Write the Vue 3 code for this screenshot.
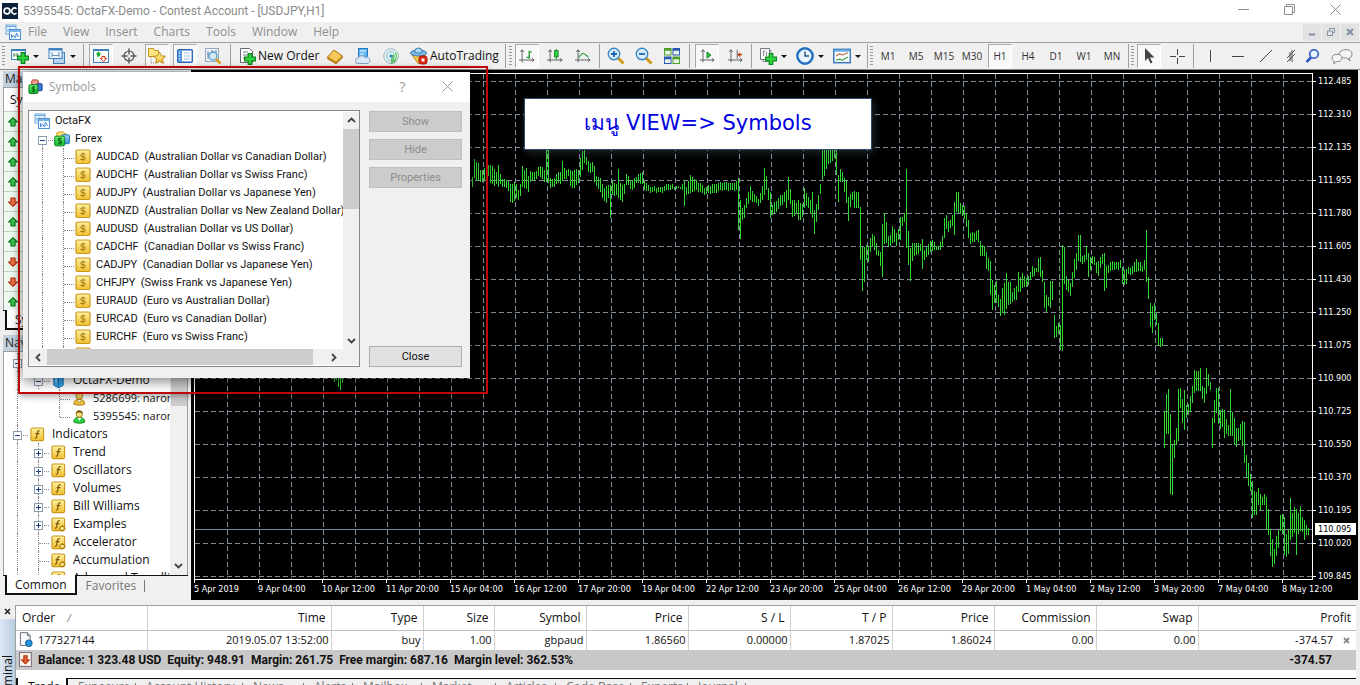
<script setup>
const menus = ['File', 'View', 'Insert', 'Charts', 'Tools', 'Window', 'Help']
const periods = ['M1', 'M5', 'M15', 'M30', 'H1', 'H4', 'D1', 'W1', 'MN']
const watch = ['up', 'up', 'up', 'up', 'down', 'up', 'up', 'down', 'down', 'up']

const pairs = [
  ['AUDCAD', 'Australian Dollar vs Canadian Dollar'],
  ['AUDCHF', 'Australian Dollar vs Swiss Franc'],
  ['AUDJPY', 'Australian Dollar vs Japanese Yen'],
  ['AUDNZD', 'Australian Dollar vs New Zealand Dollar'],
  ['AUDUSD', 'Australian Dollar vs US Dollar'],
  ['CADCHF', 'Canadian Dollar vs Swiss Franc'],
  ['CADJPY', 'Canadian Dollar vs Japanese Yen'],
  ['CHFJPY', 'Swiss Frank vs Japanese Yen'],
  ['EURAUD', 'Euro vs Australian Dollar'],
  ['EURCAD', 'Euro vs Canadian Dollar'],
  ['EURCHF', 'Euro vs Swiss Franc'],
]
const symbolRows = [
  { text: 'OctaFX', icon: 'charts', level: 0, box: '', lines: [] },
  { text: 'Forex', icon: 'folders', level: 1, box: '−', lines: [1] },
  ...pairs.map(([code, name]) => ({
    text: `${code}  (${name})`, icon: 'dollar', level: 2, box: '', lines: [1, 2],
  })),
  { text: '', icon: 'dollar', level: 2, box: '', lines: [1, 2] },
]

const navRows = [
  { text: 'Accounts', icon: 'user', level: 0, box: '−', lines: [0] },
  { text: 'OctaFX-Demo', icon: 'server', level: 1, box: '−', lines: [0, 1] },
  { text: '5286699: naron', icon: 'user', level: 2, box: '', lines: [0, 2] },
  { text: '5395545: naron', icon: 'useron', level: 2, box: '', lines: [0, 2], last: true },
  { text: 'Indicators', icon: 'fx', level: 0, box: '−', lines: [0] },
  ...['Trend', 'Oscillators', 'Volumes', 'Bill Williams'].map((text) => ({
    text, icon: 'fx', level: 1, box: '+', lines: [0, 1],
  })),
  { text: 'Examples', icon: 'fxc', level: 1, box: '+', lines: [0, 1] },
  ...['Accelerator', 'Accumulation', 'Advanced Trendlin'].map((text) => ({
    text, icon: 'fxc', level: 1, box: '', lines: [0, 1],
  })),
]

const prices = [
  '112.485', '112.310', '112.135', '111.955', '111.780', '111.605', '111.430', '111.250',
  '111.075', '110.900', '110.725', '110.550', '110.370', '110.195', '110.020', '109.845',
]
const times = [
  '5 Apr 2019', '9 Apr 04:00', '10 Apr 12:00', '11 Apr 20:00', '15 Apr 04:00', '16 Apr 12:00',
  '17 Apr 20:00', '19 Apr 04:00', '22 Apr 12:00', '23 Apr 20:00', '25 Apr 04:00', '26 Apr 12:00',
  '29 Apr 20:00', '1 May 04:00', '2 May 12:00', '3 May 20:00', '7 May 04:00', '8 May 12:00',
]
const gridX = Array.from({ length: 34 }, (_, i) => 227.5 + i * 32)
const gridY = Array.from({ length: 16 }, (_, i) => 81.5 + i * 33)

/* Each entry is x, high, low; bars between two entries are interpolated. */
const series = `472 177 187 474 159 178 478 163 181 480 170 182 484 168 180 488 165 176 490 165 183 494 169 186
496 172 184 498 165 187 500 174 184 502 179 187 506 180 188 508 181 191 510 184 202 514 182 201 516 184 198
518 190 200 520 184 196 522 166 187 524 170 188 526 168 189 528 176 192 530 171 182 534 172 180 538 167 176
542 167 179 544 170 182 546 145 182 548 145 183 550 178 188 552 179 187 556 174 184 560 172 184 562 161 181
564 168 179 568 169 176 570 170 186 574 170 188 578 170 183 580 158 177 582 151 170 584 150 163 586 157 165
588 161 172 592 162 172 594 166 182 596 176 186 600 178 192 604 188 201 606 186 203 608 185 198 610 185 218
612 180 195 616 184 195 618 169 198 620 183 200 622 185 202 624 184 194 626 174 185 628 176 185 630 180 189
634 178 188 636 177 183 638 174 183 642 172 184 644 181 190 648 185 191 652 187 192 660 187 192 668 184 190
676 186 189 680 187 189 682 184 190 684 180 206 686 187 195 690 175 193 692 177 192 696 180 190 700 183 192
704 188 195 708 185 193 714 184 193 720 182 190 726 182 190 732 183 190 736 181 190 738 178 230 740 200 239
742 208 220 744 205 218 746 198 208 750 186 200 754 194 202 758 199 206 762 186 200 764 168 195 766 176 190
768 188 200 770 192 218 772 205 215 776 201 212 780 195 206 784 192 202 786 190 208 788 177 200 790 189 204
792 200 217 794 200 216 796 203 214 798 200 220 802 204 217 804 188 208 806 193 206 808 197 208 810 200 214
812 192 218 814 210 234 816 204 222 818 195 210 820 184 194 822 145 180 828 145 164 830 145 163 834 145 158
836 145 175 838 175 202 840 169 182 842 172 182 844 178 192 846 181 203 848 197 221 850 194 207 852 192 200
854 191 208 858 192 208 860 207 260 862 247 291 864 247 282 866 245 260 868 246 262 870 238 252 872 234 247
874 236 250 876 243 255 878 250 256 880 252 266 882 224 277 884 213 244 886 222 243 888 236 247 890 235 246
892 226 243 894 229 242 896 233 246 898 229 240 900 217 240 902 217 226 904 213 222 906 169 248 908 231 265
910 248 281 912 243 261 914 243 256 918 243 254 920 244 251 922 239 269 924 250 260 926 247 257 930 241 252
932 240 251 934 242 250 936 246 250 938 246 250 940 242 250 942 236 247 944 218 238 946 215 229 948 221 232
950 220 228 952 215 226 954 202 235 956 192 212 958 192 213 960 203 214 962 205 216 964 206 219 966 213 227
968 220 238 970 233 244 974 233 242 976 231 240 978 230 242 980 241 256 982 245 256 984 246 256 986 252 269
988 258 271 990 261 295 992 280 310 994 285 303 996 281 303 998 295 307 1000 299 316 1002 288 313 1004 283 315
1006 273 309 1008 282 305 1010 282 304 1012 292 302 1016 286 300 1018 272 292 1020 277 292 1022 273 288
1024 276 287 1026 278 287 1030 272 280 1032 266 277 1036 268 272 1038 258 272 1040 257 277 1042 270 282
1044 282 308 1046 295 312 1048 297 306 1050 281 308 1052 281 300 1054 315 338 1056 326 337 1058 323 334
1060 325 350 1062 245 351 1064 247 284 1066 276 290 1068 280 292 1070 283 296 1072 272 287 1074 259 278
1076 253 270 1078 235 261 1080 235 262 1082 256 264 1084 255 262 1086 246 260 1088 253 277 1090 257 270
1092 256 264 1094 257 265 1096 262 273 1098 261 276 1100 257 268 1102 254 264 1104 253 291 1106 266 288
1108 265 273 1112 261 270 1116 262 269 1120 260 268 1122 267 284 1124 270 285 1126 269 284 1128 267 274
1132 266 274 1136 259 272 1138 262 271 1140 262 271 1142 266 272 1144 260 270 1146 230 282 1148 277 299
1150 303 327 1152 306 333 1154 303 320 1156 313 325 1158 323 346 1160 338 347 1162 338 346 1164 411 448
1166 394 434 1168 389 434 1170 414 494 1172 444 495 1174 440 458 1176 428 445 1178 389 441 1180 388 408
1182 399 423 1184 390 430 1186 405 418 1188 404 415 1190 396 412 1192 386 403 1194 370 393 1196 371 391
1198 371 391 1200 368 391 1202 386 399 1204 388 403 1206 368 394 1208 374 386 1210 382 390 1212 418 448
1214 400 423 1216 388 413 1218 388 424 1220 410 429 1222 409 427 1224 410 438 1226 419 434 1228 425 436
1230 389 436 1232 412 436 1234 418 445 1236 428 447 1238 428 441 1240 424 440 1242 421 446 1244 422 463
1246 455 477 1248 463 486 1250 474 491 1252 481 518 1254 491 515 1256 492 515 1258 488 505 1260 494 510
1262 497 505 1264 494 505 1266 497 530 1268 509 535 1270 529 556 1272 539 567 1274 549 564 1276 536 556
1278 530 548 1280 515 531 1282 514 534 1284 517 555 1286 534 557 1288 529 554 1290 498 540 1292 513 537
1294 507 533 1296 509 555 1298 513 534 1300 506 531 1302 517 532 1304 520 540 1306 525 535 1308 528 535`
  .split(/\s+/).map(Number)

function barsPath(values) {
  const keys = []
  for (let i = 0; i < values.length; i += 3) keys.push(values.slice(i, i + 3))
  let d = 'M334.5 376V382M336.5 376V380M338.5 376V387M340.5 376V390M342.5 376V383M348.5 376V379'
  keys.forEach(([x, hi, lo], i) => {
    const next = keys[i + 1] || [x + 2, hi, lo]
    for (let px = x; px < next[0]; px += 2) {
      const t = (px - x) / (next[0] - x)
      const wobble = px === x ? 0 : ((px * 7) % 3) - 1
      const top = Math.round(hi + (next[1] - hi) * t + wobble)
      const bottom = Math.round(lo + (next[2] - lo) * t + wobble)
      d += `M${px + 0.5} ${top}V${bottom}`
    }
  })
  return d
}
const bars = barsPath(series)

const columns = [
  ['order', 'Order', '177327144'], ['time', 'Time', '2019.05.07 13:52:00'], ['type', 'Type', 'buy'],
  ['size', 'Size', '1.00'], ['type', 'Symbol', 'gbpaud'], ['num', 'Price', '1.86560'],
  ['num', 'S / L', '0.00000'], ['num', 'T / P', '1.87025'], ['num', 'Price', '1.86024'],
  ['num', 'Commission', '0.00'], ['num', 'Swap', '0.00'], ['profit', 'Profit', '-374.57'],
]
const tabs = [
  ['Exposure', 68], ['Account History', 107], ['News', 61], ['Alerts', 49], ['Mailbox', 69],
  ['Market', 74], ['Articles', 60], ['Code Base', 75], ['Experts', 57], ['Journal', 58],
]
</script>

<template>
  <div class="app">
    <svg class="defs" aria-hidden="true">
      <defs>
        <linearGradient id="gold" x1="0" y1="0" x2="0" y2="1"><stop offset="0" stop-color="#fff0a0" /><stop offset="1" stop-color="#f0c030" /></linearGradient>
        <linearGradient id="blue" x1="0" y1="0" x2="0" y2="1"><stop offset="0" stop-color="#9fd4f8" /><stop offset="1" stop-color="#3f8fd8" /></linearGradient>
        <linearGradient id="green" x1="0" y1="0" x2="0" y2="1"><stop offset="0" stop-color="#6cf06c" /><stop offset="1" stop-color="#10b428" /></linearGradient>
      </defs>
      <symbol id="i-plus" viewBox="0 0 10 10"><path d="M3.5.5h3v3h3v3h-3v3h-3v-3h-3v-3h3z" fill="#2fd63f" stroke="#0a8a1a" /></symbol>
      <symbol id="i-charts" viewBox="0 0 16 16"><rect x="1" y="1" width="10" height="9" fill="#e8f4ff" stroke="#6aa8dc" /><path d="M1 2.5h10M3 5v3M5 4v3M7 5v3" stroke="#6aa8dc" /><rect x="4.500" y="5.500" width="11" height="10" fill="#f4faff" stroke="#4c90d0" /><path d="M4.500 7h11" stroke="#7ab4e4" stroke-width="2" /><path d="M6.500 10v4l2-3 2 3 1-5 2 4" fill="none" stroke="#4c90d0" /></symbol>
      <symbol id="i-newchart" viewBox="0 0 18 18"><rect x=".5" y="2.500" width="14" height="10" fill="#f4faff" stroke="#3f80c0" /><path d="M0 3h15" stroke="#3f80c0" stroke-width="2" /><path d="M3 6v4M2 8h6M6 6v4" stroke="#6aa060" /><use href="#i-plus" x="6" y="5" width="12" height="12" /></symbol>
      <symbol id="i-profiles" viewBox="0 0 18 18"><rect x="5.500" y="5.500" width="11" height="11" fill="#b8d4ee" stroke="#3f80c0" /><rect x="1" y="1.500" width="13" height="10" fill="#eef6ff" stroke="#3f80c0" /><path d="M1 2.500h13" stroke="#3f80c0" stroke-width="2" /><path d="M4 5v5M11 5v5M4 8.500h7" stroke="#7090b0" /></symbol>
      <symbol id="i-market" viewBox="0 0 16 16"><rect x=".5" y="1.500" width="15" height="13" fill="#fff" stroke="#3f80c0" /><path d="M0 2h16" stroke="#3f80c0" stroke-width="2" /><path d="M5.500 3.500l3 2.800H7v2.200H4V6.300H2.500z" fill="#20b030" /><path d="M10.500 13.500l3-3H12v-2H9v2H7.500z" fill="#fff0ec" stroke="#d03010" /></symbol>
      <symbol id="i-cross" viewBox="0 0 16 16"><circle cx="8" cy="8" r="5" fill="none" stroke="#555" stroke-width="1.200" /><path d="M8 .5v6M8 9.500v6M.5 8h6M9.500 8h6" stroke="#555" stroke-width="1.400" /></symbol>
      <symbol id="i-star" viewBox="0 0 18 18"><path d="M.5 1.500h5l1 2h4v6H.5z" fill="#ffe680" stroke="#c09820" /><path d="M3 10v6h4" fill="none" stroke="#888" stroke-dasharray="1 1" /><path d="M11.500 5l1.900 3.800 4.100.5-3 2.800.8 4.200-3.800-2-3.800 2 .8-4.200-3-2.800 4.100-.5z" fill="url(#gold)" stroke="#c08a10" /></symbol>
      <symbol id="i-list" viewBox="0 0 16 16"><rect x=".7" y="1.700" width="14.600" height="12.600" rx="1" fill="#fff" stroke="#2868b8" stroke-width="1.400" /><path d="M3 2v12" stroke="#5b9ae0" stroke-width="4" /><path d="M7 5h6M7 8h6M7 11h6" stroke="#a9c0da" /><path d="M2 5h1M2 8h1M2 11h1" stroke="#fff" /></symbol>
      <symbol id="i-tester" viewBox="0 0 18 18"><rect x="1.500" y="1.500" width="13" height="13" fill="#eef5fb" stroke="#90a8c0" /><path d="M4 4v8M3 7h3M8 3v4M12 3v5" stroke="#6c8098" /><circle cx="9" cy="9" r="4" fill="#cfe8fa" fill-opacity=".8" stroke="#5a9cc8" stroke-width="1.300" /><path d="M12 12l4.500 4.500" stroke="#e0a020" stroke-width="2.600" /></symbol>
      <symbol id="i-order" viewBox="0 0 18 18"><path d="M2.500 1.500h9l3 3v11h-12z" fill="#fff" stroke="#667" /><path d="M5 5h5M5 8h5M5 11h3" stroke="#778" /><use href="#i-plus" x="6" y="6" width="12" height="12" /></symbol>
      <symbol id="i-book" viewBox="0 0 16 16"><path d="M.5 9L7 2l8.500 6L9 14.500z" fill="#f6c858" stroke="#a87010" /><path d="M.5 9v2l8.500 5v-1.500zM9 16l6.500-6V8L9 14.500z" fill="#c88a18" stroke="#a87010" stroke-width=".5" /></symbol>
      <symbol id="i-cloud" viewBox="0 0 16 16"><rect x="3.500" y=".5" width="9" height="9" fill="#5bb4f0" stroke="#2878c0" /><path d="M5 3h6M5 6h4" stroke="#fff" /><path d="M3 15.500a2.700 2.700 0 010-5.400 4 4 0 017-.6 3 3 0 013 6z" fill="#dbe9f6" stroke="#8aa4c4" /></symbol>
      <symbol id="i-signal" viewBox="0 0 16 16"><circle cx="8" cy="8" r="7.300" fill="#e4f0f0" stroke="#9cb8c8" /><circle cx="8" cy="8" r="4.500" fill="none" stroke="#8ac0d8" /><path d="M8 8v8a8 8 0 006-12.500z" fill="#48b858" fill-opacity=".75" /><path d="M11 5a4 4 0 010 6M13 3.500a7 7 0 010 9" fill="none" stroke="#e8f8e8" /><circle cx="8" cy="8" r="1.600" fill="#2090c8" /></symbol>
      <symbol id="i-auto" viewBox="0 0 18 18"><path d="M2 8l6.500 9 7-9z" fill="#f8cc50" stroke="#b88818" /><ellipse cx="8.500" cy="6" rx="8" ry="3" fill="#7cbce4" stroke="#3878a8" /><path d="M4.500 5a4 4 0 018 0c-2 1.400-6 1.400-8 0z" fill="#a8d8f4" stroke="#3878a8" /><rect x="9" y="9" width="8" height="8" rx="2.500" fill="#e02810" stroke="#a01808" /><rect x="11.500" y="11.500" width="3" height="3" fill="#fff" /></symbol>
      <symbol id="i-bar" viewBox="0 0 18 16"><path d="M3.500 1v14M0 12.500h17M1.500 3.500l2-2.500 2 2.500M14.500 10.500l2.500 2-2.500 2" fill="none" stroke="#555" /><path d="M11.500 2v9M11.500 3.500h3M8.500 9.500h3" stroke="#189028" stroke-width="1.400" /></symbol>
      <symbol id="i-candle" viewBox="0 0 18 16"><path d="M3.500 1v14M0 12.500h17M1.500 3.500l2-2.500 2 2.500M14.500 10.500l2.500 2-2.500 2" fill="none" stroke="#555" /><path d="M10.500 0v12" stroke="#108020" /><rect x="8.500" y="2" width="4" height="7" fill="#30d840" stroke="#108020" /></symbol>
      <symbol id="i-line" viewBox="0 0 18 16"><path d="M3.500 1v14M0 12.500h17M1.500 3.500l2-2.500 2 2.500M14.500 10.500l2.500 2-2.500 2" fill="none" stroke="#555" /><path d="M4 10c2-2 3-5 5-5s3 2 6 4" fill="none" stroke="#40a050" stroke-width="1.400" /></symbol>
      <symbol id="i-zoomin" viewBox="0 0 18 18"><path d="M10.500 10.500l6 6" stroke="#d09818" stroke-width="3" /><circle cx="7" cy="7" r="5.700" fill="#d8efff" stroke="#3888c8" stroke-width="1.400" /><path d="M4 7h6M7 4v6" stroke="#2060b0" stroke-width="1.800" /></symbol>
      <symbol id="i-zoomout" viewBox="0 0 18 18"><path d="M10.500 10.500l6 6" stroke="#d09818" stroke-width="3" /><circle cx="7" cy="7" r="5.700" fill="#d8efff" stroke="#3888c8" stroke-width="1.400" /><path d="M4 7h6" stroke="#2060b0" stroke-width="1.800" /></symbol>
      <symbol id="i-tiles" viewBox="0 0 17 17"><path d="M0 0h8v8H0zM9 9h8v8H9z" fill="#4c9c28" /><path d="M9 0h8v8H9zM0 9h8v8H0z" fill="#2858b0" /><path d="M1 3h6v4H1zM10 3h6v4h-6zM1 12h6v4H1zM10 12h6v4h-6z" fill="#e8f4e8" /></symbol>
      <symbol id="i-scroll" viewBox="0 0 18 16"><path d="M4.500 1v14M1 12.500h16M2.500 3.500l2-2.500 2 2.500M14.500 10.500l2.500 2-2.500 2" fill="none" stroke="#555" /><path d="M9 3.500l4.500 3.500L9 10.500z" fill="#30c040" stroke="#108020" /></symbol>
      <symbol id="i-shift" viewBox="0 0 18 16"><path d="M4.500 1v14M1 12.500h16M2.500 3.500l2-2.500 2 2.500M14.500 10.500l2.500 2-2.500 2M11.500 1v10" fill="none" stroke="#555" /><path d="M17 6.500h-4M15 4.500l-2.500 2 2.500 2" fill="none" stroke="#c04010" stroke-width="1.400" /></symbol>
      <symbol id="i-indic" viewBox="0 0 18 18"><path d="M4 3.500h8v11H4z" fill="#fff" stroke="#889" /><path d="M1.500 1.500h9v11h-9z" fill="#f8faf8" stroke="#778" /><path d="M4.500 4v5M7.500 5v4M4.500 4h2" stroke="#889" fill="none" /><use href="#i-plus" x="6" y="6" width="12" height="12" /></symbol>
      <symbol id="i-clock" viewBox="0 0 16 16"><circle cx="8" cy="8" r="6.800" fill="#e8f4ff" stroke="#2470c0" stroke-width="2.200" /><path d="M8 4v4h3.500" fill="none" stroke="#2a4870" stroke-width="1.200" /></symbol>
      <symbol id="i-template" viewBox="0 0 17 16"><rect x=".7" y="1.700" width="15.600" height="12.600" fill="#fff" stroke="#3878b8" stroke-width="1.400" /><path d="M1 3h15" stroke="#70b0e8" stroke-width="2" /><path d="M3 8l3-2 3 1 5-2" fill="none" stroke="#b06040" /><path d="M3 12l3-1 3 1 5-3" fill="none" stroke="#30a040" /></symbol>
      <symbol id="i-arrow" viewBox="0 0 16 16"><path d="M4 0v13l3-3 2.500 5.500 2-1L9 9.500h4.500z" fill="#444" /></symbol>
      <symbol id="i-crosshair" viewBox="0 0 16 16"><path d="M8.500 1v6M8.500 10v6M1 8.500h6M10 8.500h6" stroke="#444" /></symbol>
      <symbol id="i-vline" viewBox="0 0 16 16"><path d="M8.500 2v12" stroke="#444" /></symbol>
      <symbol id="i-hline" viewBox="0 0 16 16"><path d="M2 8.500h12" stroke="#444" /></symbol>
      <symbol id="i-trend" viewBox="0 0 16 16"><path d="M2 14L14 2" stroke="#444" /></symbol>
      <symbol id="i-channel" viewBox="0 0 12 16"><path d="M2 10l8-8M2 14l8-8M5 4v9M7 2v12" stroke="#444" stroke-width=".9" /></symbol>
      <symbol id="i-search" viewBox="0 0 16 16"><path d="M6 9.500L1.500 14" stroke="#2858c8" stroke-width="2.600" /><circle cx="9" cy="6" r="4.300" fill="#e8f2ff" stroke="#2858c8" stroke-width="1.600" /></symbol>
      <symbol id="i-chat" viewBox="0 0 22 16"><path d="M8 7c0-7 13-7 13-1 0 3-2 4-3 4l1 3-3-3c-5 0-8-1-8-3z" fill="#f4f4f4" stroke="#888" /><path d="M1 10c0-5 10-5 10 0 0 3-4 4-6 3.500L3 16v-3c-1-.5-2-1.500-2-3z" fill="#f4f4f4" stroke="#888" /></symbol>
      <symbol id="i-up" viewBox="0 0 10 10"><path d="M5 .8L9.300 5H7v3.800H3V5H.7z" fill="#40c850" stroke="#0a7a1c" stroke-width="1.200" /></symbol>
      <symbol id="i-down" viewBox="0 0 10 10"><path d="M5 9.200L.7 5H3V1.200h4V5h2.300z" fill="#f07840" stroke="#b83010" stroke-width="1.200" /></symbol>
      <symbol id="i-folders" viewBox="0 0 17 16"><path d="M3 4V1.500L5 .5h5l1.500 2H13V8H3z" fill="#ffe070" stroke="#c09818" /><rect x="8" y="3.500" width="8.500" height="9.500" rx="1.500" fill="url(#blue)" stroke="#1878a8" /><rect x=".7" y="5" width="10.600" height="10.300" rx="1.500" fill="url(#green)" stroke="#088020" /><path d="M8 7.500H4.500v2.500H8v2.500H4.200M6.200 6.500v7.500" fill="none" stroke="#065a14" stroke-width=".9" /></symbol>
      <symbol id="i-logo" viewBox="0 0 17 16"><path d="M4 4V1.500L5 .5h4.500l1.500 1.200V8H4z" fill="#f0a090" stroke="#b02818" /><rect x="9" y="4.500" width="6" height="7.500" rx="1" fill="#3f78d0" stroke="#183c90" /><rect x="1" y="5.500" width="9.500" height="9.500" rx="1.500" fill="url(#green)" stroke="#087018" /><path d="M7.500 8H4.500v2.300H7.300v2.300H4.200M5.900 7v7" fill="none" stroke="#065a14" stroke-width=".9" /></symbol>
      <symbol id="i-dollar" viewBox="0 0 16 16"><rect x="1" y="1" width="14" height="13.500" rx="1.500" fill="url(#gold)" stroke="#c8981c" stroke-width="1.200" /><path d="M10.500 5H6.500l-1 1.300L6.500 7.700h3l1 1.300-1 1.500H5.300M8 3.500V12" fill="none" stroke="#a87a10" stroke-width="1" /></symbol>
      <symbol id="i-fx" viewBox="0 0 16 16"><rect x="1" y="1" width="13.500" height="13.500" rx="1.500" fill="url(#gold)" stroke="#c8981c" stroke-width="1.200" /><path d="M10.500 4H9L8 5 7 11l-1 1H5M6 7h4" fill="none" stroke="#7a5608" stroke-width="1.300" /></symbol>
      <symbol id="i-fxc" viewBox="0 0 16 16"><rect x="1" y="1" width="13.500" height="13.500" rx="1.500" fill="url(#gold)" stroke="#c8981c" stroke-width="1.200" /><path d="M9.500 4H8L7 5 6 11l-1 1H4M5 7h4" fill="none" stroke="#7a5608" stroke-width="1.300" /><path d="M12 9l3 3-3 3-3-3z" fill="#fff0a0" stroke="#b08010" stroke-width="1.200" /></symbol>
      <symbol id="i-server" viewBox="0 0 16 16"><path d="M3 3l6-2.500 4 2V13l-5 3-5-3z" fill="#3aa8f0" stroke="#1470b0" /><path d="M8 5l5-2.500M8 5v11M3 3l5 2" stroke="#1470b0" /><path d="M4.500 6l2 .8M4.500 8.500l2 .8" stroke="#fff" /></symbol>
      <symbol id="i-user" viewBox="0 0 16 16"><path d="M2 14c0-4 2-5 5.500-5s6 1 6 5c-2 1.500-9 1.500-11.500 0z" fill="#e8bc40" stroke="#a87c10" /><circle cx="7.800" cy="5" r="3.700" fill="#f4d468" stroke="#a87c10" /><path d="M6 9.500l2 3 2-3" fill="#fff" stroke="#a87c10" stroke-width=".6" /></symbol>
      <symbol id="i-useron" viewBox="0 0 16 16"><path d="M2 14c0-4 2-5 5.500-5s6 1 6 5c-2 1.500-9 1.500-11.500 0z" fill="#30d040" stroke="#108820" /><circle cx="7.800" cy="5.500" r="3.400" fill="#f8dc88" stroke="#a87c10" /><path d="M4 5c0-5 7.500-5 7.500 0-2-1-5-2-7.500 0z" fill="#7a5010" /><path d="M6 9.500l2 3 2-3" fill="#fff" /></symbol>
      <symbol id="i-doc" viewBox="0 0 14 16"><path d="M1 .7h7.500L11.500 4v10.300H1z" fill="#f8fafc" stroke="#667" /><path d="M8.500.7V4h3" fill="none" stroke="#667" /><circle cx="10" cy="12" r="3.600" fill="#2890d8" stroke="#1460a0" /></symbol>
      <symbol id="i-balance" viewBox="0 0 13 14"><rect x=".5" y=".5" width="11" height="13" fill="#fff4e8" stroke="#778" /><path d="M6 11L2.500 7.500h2v-4h3v4h2z" fill="#e06838" stroke="#b02808" /></symbol>
    </svg>

    <header class="titlebar">
      <svg class="brand" viewBox="0 0 16 16"><rect width="16" height="16" fill="#0c2038" /><circle cx="5" cy="8" r="2.900" fill="none" stroke="#fff" stroke-width="1.700" /><path d="M14.500 5.800a2.900 2.900 0 100 4.400" fill="none" stroke="#fff" stroke-width="1.700" /></svg>
      <h1>5395545: OctaFX-Demo - Contest Account - [USDJPY,H1]</h1>
      <div class="wincontrols">
        <button aria-label="Minimize"><svg viewBox="0 0 11 11"><path d="M0 5.500h11" /></svg></button>
        <button aria-label="Restore"><svg viewBox="0 0 11 11"><path d="M2.500 2.500v-2h8v8h-2M.5 2.500h8v8h-8z" /></svg></button>
        <button aria-label="Close"><svg viewBox="0 0 11 11"><path d="M.5.5l10 10M10.500.5l-10 10" /></svg></button>
      </div>
    </header>

    <nav class="menubar">
      <svg class="ico"><use href="#i-charts" /></svg>
      <button v-for="m in menus" :key="m">{{ m }}</button>
      <div class="mdi">
        <button aria-label="Minimize chart"><svg viewBox="0 0 8 8"><path d="M1 6.500h6" /></svg></button>
        <button aria-label="Restore chart"><svg viewBox="0 0 8 8"><path class="thin" d="M2.500 2.500v-2h5v4h-2M.5 3h5v4.500h-5z" /></svg></button>
        <button aria-label="Close chart"><svg viewBox="0 0 8 8"><path d="M1 1l6 6M7 1L1 7" /></svg></button>
      </div>
    </nav>

    <div class="toolbar" role="toolbar">
      <i class="grip first"></i>
      <button class="drop" aria-label="New chart"><svg class="ico"><use href="#i-newchart" /></svg></button>
      <button class="drop" aria-label="Profiles"><svg class="ico"><use href="#i-profiles" /></svg></button>
      <i class="sep"></i>
      <button class="tool on" aria-label="Market watch"><svg class="ico"><use href="#i-market" /></svg></button>
      <button class="tool" aria-label="Data window"><svg class="ico"><use href="#i-cross" /></svg></button>
      <button class="tool on" aria-label="Navigator"><svg class="ico big"><use href="#i-star" /></svg></button>
      <button class="tool on" aria-label="Terminal"><svg class="ico"><use href="#i-list" /></svg></button>
      <button class="tool" aria-label="Strategy tester"><svg class="ico big"><use href="#i-tester" /></svg></button>
      <i class="sep"></i>
      <button class="labelled order"><svg class="ico"><use href="#i-order" /></svg>New Order</button>
      <button class="tool" aria-label="MetaEditor"><svg class="ico"><use href="#i-book" /></svg></button>
      <button class="tool" aria-label="Hosting"><svg class="ico"><use href="#i-cloud" /></svg></button>
      <button class="tool" aria-label="Signals"><svg class="ico"><use href="#i-signal" /></svg></button>
      <button class="labelled auto"><svg class="ico"><use href="#i-auto" /></svg>AutoTrading</button>
      <i class="sep"></i>
      <i class="grip"></i>
      <button class="tool on" aria-label="Bar chart"><svg class="ico"><use href="#i-bar" /></svg></button>
      <button class="tool" aria-label="Candlesticks"><svg class="ico"><use href="#i-candle" /></svg></button>
      <button class="tool" aria-label="Line chart"><svg class="ico"><use href="#i-line" /></svg></button>
      <i class="sep tight"></i>
      <button class="tool" aria-label="Zoom in"><svg class="ico big"><use href="#i-zoomin" /></svg></button>
      <button class="tool" aria-label="Zoom out"><svg class="ico big"><use href="#i-zoomout" /></svg></button>
      <button class="tool" aria-label="Tile windows"><svg class="ico"><use href="#i-tiles" /></svg></button>
      <i class="sep"></i>
      <button class="tool on" aria-label="Auto scroll"><svg class="ico"><use href="#i-scroll" /></svg></button>
      <button class="tool" aria-label="Chart shift"><svg class="ico"><use href="#i-shift" /></svg></button>
      <i class="sep tight"></i>
      <button class="drop" aria-label="Indicators"><svg class="ico"><use href="#i-indic" /></svg></button>
      <button class="drop" aria-label="Periods"><svg class="ico"><use href="#i-clock" /></svg></button>
      <button class="drop" aria-label="Templates"><svg class="ico"><use href="#i-template" /></svg></button>
      <i class="sep tight"></i>
      <i class="grip"></i>
      <button v-for="p in periods" :key="p" class="tool period" :class="{ on: p === 'H1' }">{{ p }}</button>
      <i class="sep tight"></i>
      <i class="grip"></i>
      <button class="tool on" aria-label="Cursor"><svg class="ico"><use href="#i-arrow" /></svg></button>
      <button class="tool" aria-label="Crosshair"><svg class="ico"><use href="#i-crosshair" /></svg></button>
      <i class="sep tight"></i>
      <button class="tool" aria-label="Vertical line"><svg class="ico"><use href="#i-vline" /></svg></button>
      <button class="tool" aria-label="Horizontal line"><svg class="ico"><use href="#i-hline" /></svg></button>
      <button class="tool" aria-label="Trendline"><svg class="ico"><use href="#i-trend" /></svg></button>
      <button class="tool slim" aria-label="Channel"><svg class="ico"><use href="#i-channel" /></svg></button>
      <button class="tool slim" aria-label="Search"><svg class="ico"><use href="#i-search" /></svg></button>
      <button class="tool chat" aria-label="Chat"><svg class="ico wide"><use href="#i-chat" /></svg></button>
    </div>

    <main class="workspace">
      <aside class="side">
        <section class="watch">
          <h2>Market Watch</h2>
          <div class="sheet">
            <div class="colhead">Symbol</div>
            <ul>
              <li v-for="(dir, i) in watch" :key="i"><svg><use :href="'#i-' + dir" /></svg></li>
            </ul>
          </div>
          <div class="tabs"><button class="current">Symbols</button></div>
        </section>
        <section class="navigator">
          <h2>Navigator</h2>
          <div class="sheet">
            <ul class="tree nav">
              <li v-for="(row, i) in navRows" :key="i" :class="'lv' + row.level" :style="{ '--level': row.level }">
                <i v-for="l in row.lines" :key="l" class="vline" :class="{ half: row.last && l === 2 }" :style="{ '--at': l }"></i>
                <i class="hline"></i>
                <b v-if="row.box" class="box" :class="{ plus: row.box === '+' }"></b>
                <svg class="ico"><use :href="'#i-' + row.icon" /></svg>
                <span>{{ row.text }}</span>
              </li>
            </ul>
            <div class="vbar"><i class="thumb"></i><svg viewBox="0 0 9 6"><path d="M1 1l3.500 3.500L8 1" /></svg></div>
          </div>
          <div class="tabs"><button class="current">Common</button><button>Favorites</button></div>
        </section>
      </aside>

      <section class="chart">
        <svg class="plot" viewBox="194 73 1119 507" preserveAspectRatio="xMaxYMin slice">
          <g class="grid">
            <line v-for="x in gridX" :key="'x' + x" :x1="x" :x2="x" y1="74" y2="579" />
            <line v-for="y in gridY" :key="'y' + y" x1="195" x2="1312" :y1="y" :y2="y" />
          </g>
          <path class="quote" d="M195 529.500H1312" />
          <path class="bars" :d="bars" />
          <rect class="frame" x="194.500" y="73.500" width="1118" height="506" />
        </svg>
        <ol class="priceaxis">
          <li v-for="p in prices" :key="p">{{ p }}</li>
        </ol>
        <ol class="timeaxis">
          <li v-for="t in times" :key="t">{{ t }}</li>
        </ol>
        <output class="last">110.095</output>
        <p class="callout">เมนู VIEW=&gt; Symbols</p>
      </section>
    </main>

    <section class="terminal">
      <div class="rail"><button aria-label="Close terminal"><svg viewBox="0 0 7 7"><path d="M1 1l5 5M6 1L1 6" /></svg></button><span>Terminal</span></div>
      <div class="trade">
        <table>
          <colgroup><col v-for="(c, i) in columns" :key="i" :class="'c-' + c[0]" /></colgroup>
          <thead>
            <tr><th v-for="(c, i) in columns" :key="i" :class="'h-' + c[0]">{{ c[1] }}<i v-if="!i">/</i></th></tr>
          </thead>
          <tbody>
            <tr>
              <td v-for="(c, i) in columns" :key="i" :class="'d-' + c[0]">
                <svg v-if="!i" class="ico"><use href="#i-doc" /></svg>{{ c[2] }}<button v-if="c[0] === 'profit'" aria-label="Close order"><svg viewBox="0 0 7 7"><path d="M1 1l5 5M6 1L1 6" /></svg></button>
              </td>
            </tr>
            <tr class="summary">
              <td colspan="11"><svg class="ico"><use href="#i-balance" /></svg>Balance: 1 323.48 USD&nbsp; Equity: 948.91&nbsp; Margin: 261.75&nbsp; Free margin: 687.16&nbsp; Margin level: 362.53%</td>
              <td class="total">-374.57</td>
            </tr>
          </tbody>
        </table>
        <div class="bottomtabs">
          <button class="current">Trade</button>
          <button v-for="[name, width] in tabs" :key="name" :style="{ width: width + 'px' }">{{ name }}</button>
        </div>
      </div>
    </section>

    <div class="highlight"></div>

    <div class="dialog" role="dialog" aria-label="Symbols">
      <header>
        <svg class="ico"><use href="#i-logo" /></svg>
        <h2>Symbols</h2>
        <button aria-label="Help">?</button>
        <button aria-label="Close dialog"><svg viewBox="0 0 11 11"><path d="M.5.5l10 10M10.500.5l-10 10" /></svg></button>
      </header>
      <div class="content">
        <div class="listbox">
          <ul class="tree symbols">
            <li v-for="(row, i) in symbolRows" :key="i" :class="'lv' + row.level" :style="{ '--level': row.level }">
              <i v-for="l in row.lines" :key="l" class="vline" :style="{ '--at': l }"></i>
              <i v-if="row.level" class="hline"></i>
              <b v-if="row.box" class="box"></b>
              <svg class="ico"><use :href="'#i-' + row.icon" /></svg>
              <span>{{ row.text }}</span>
            </li>
          </ul>
          <div class="vbar">
            <svg viewBox="0 0 9 6"><path d="M1 5l3.500-3.500L8 5" /></svg><i class="thumb"></i><svg class="end" viewBox="0 0 9 6"><path d="M1 1l3.500 3.500L8 1" /></svg>
          </div>
          <div class="hbar">
            <svg viewBox="0 0 6 9"><path d="M5 1L1.500 4.500 5 8" /></svg><i class="thumb"></i><svg viewBox="0 0 6 9"><path d="M1 1l3.500 3.500L1 8" /></svg>
          </div>
        </div>
        <div class="actions">
          <button disabled>Show</button>
          <button disabled>Hide</button>
          <button disabled>Properties</button>
          <button class="close">Close</button>
        </div>
      </div>
    </div>
  </div>
</template>

<style>
html, body { margin: 0; overflow: hidden; }
</style>

<style scoped>
.app {
  --ui: "Open Sans", "Noto Sans", sans-serif;
  --compact: Roboto, "Open Sans", sans-serif;
  --axis: "DejaVu Sans Condensed", "DejaVu Sans", sans-serif;
  position: relative;
  display: flex;
  flex-direction: column;
  height: 100vh;
  overflow: hidden;
  background: #f0f0f0;
  font: 12px/16px var(--ui);
  color: #111;
}
.app * { box-sizing: border-box; }
.defs { position: absolute; width: 0; height: 0; }
button { padding: 0; border: 0; background: none; font: inherit; color: inherit; white-space: nowrap; }
h1, h2, p, ul, ol { margin: 0; padding: 0; font: inherit; list-style: none; }
.ico { flex: none; width: 16px; height: 16px; }

.titlebar { display: flex; flex: none; align-items: center; height: 22px; padding-left: 2px; gap: 5px; background: #fff; color: #8a8a8a; font-family: var(--compact); }
.brand { width: 16px; height: 16px; }
.wincontrols { display: flex; margin-left: auto; }
.wincontrols button { width: 46px; height: 20px; }
.wincontrols button:last-child { margin-right: 2px; }
.wincontrols svg { width: 11px; height: 11px; fill: none; stroke: #8c8c8c; }

.menubar { display: flex; flex: none; align-items: center; gap: 16px; height: 20px; padding-left: 5px; background: #f0f0f0; color: #8f8f8f; }
.menubar .ico { margin-right: -9px; }
.mdi { display: flex; gap: 1px; margin-left: auto; margin-right: 1px; }
.mdi button { width: 18px; height: 17px; background: #e2e2e2; }
.mdi svg { width: 8px; height: 8px; fill: none; stroke: #8090a8; stroke-width: 2; }
.mdi .thin { stroke-width: 1; }

.toolbar { display: flex; flex: none; align-items: center; height: 28px; border-top: 1px solid #a0a0a0; border-bottom: 1px solid #888; background: #f0f0f0; }
.toolbar button { flex: none; display: flex; align-items: center; height: 24px; }
.grip { flex: none; width: 4px; height: 20px; background: repeating-linear-gradient(#999 0 1px, #f0f0f0 1px 3px); border-right: 1px solid #f0f0f0; }
.grip.first { width: 4px; margin-left: 2px; }
.sep { flex: none; width: 1px; height: 24px; margin: 0 3px; background: #a0a0a0; }
.sep.tight { margin: 0 2px; }
.tool { justify-content: center; width: 24px; margin: 0 2px; }
.tool.on { border: 1px solid #a8a8a8; border-right-color: #fff; border-bottom-color: #fff; background: #f8f8f8; }
.tool.slim { width: 18px; }
.tool.chat { width: 32px; }
.tool .big { width: 18px; height: 18px; }
.tool .wide { width: 22px; }
.drop { width: 37px; padding-left: 5px; }
.drop .ico { width: 18px; height: 18px; }
.drop::after { content: ""; margin-left: 4px; border: 3px solid transparent; border-top-color: #111; border-bottom: 0; }
.labelled .ico { width: 18px; height: 18px; margin-right: 2px; }
.order { width: 87px; padding-left: 4px; }
.auto { width: 97px; padding-left: 5px; }
.period { font-size: 10px; color: #333; }

.workspace { display: flex; flex: 1; min-height: 0; padding-right: 2px; }
.side { display: flex; flex: none; flex-direction: column; width: 191px; padding: 1px 3px 0; }
.side h2 { height: 16px; padding-left: 2px; background: #c4d2e0; line-height: 15px; color: #222; }
.watch { height: 264px; }
.side .sheet { display: flex; border: 1px solid #a0a0a0; border-bottom: 0; background: #fff; overflow: hidden; }
.watch .sheet { flex-direction: column; height: 223px; }
.colhead { height: 23px; padding-left: 6px; line-height: 23px; }
.watch li { display: flex; align-items: center; height: 20px; padding-left: 4px; border-top: 1px solid #c4d4c4; background: #f0faf0; }
.watch li svg { width: 10px; height: 10px; }
.navigator .sheet { position: relative; height: 224px; }
.tabs { display: flex; height: 20px; border-top: 1px solid #111; padding-left: 2px; align-items: stretch; color: #777; }
.tabs button { position: relative; padding: 0 9px; line-height: 16px; }
.tabs .current { margin-top: -1px; padding: 2px 8px 0; border: 2px solid #111; border-top: 0; background: #fff; color: #111; }
.tabs button:not(.current)::after { content: ""; position: absolute; right: 0; top: 4px; height: 12px; border-right: 1px solid #777; }

.tree { flex: 1; min-width: 0; padding-top: 1px; overflow: hidden; }
.tree li { position: relative; display: flex; align-items: center; height: 18px; white-space: pre; }
.tree.nav li { padding-left: calc(26px + var(--level) * 21px); gap: 7px; }
.tree.nav .lv2 { font-size: 11px; gap: 6px; }
.tree.nav .ico { width: 15px; height: 15px; }
.tree i { position: absolute; }
.vline { top: 0; bottom: 0; left: calc(13px + var(--at) * 21px); border-left: 1px dotted #888; }
.vline.half { bottom: 8px; }
.hline { top: 10px; left: calc(14px + var(--level) * 21px); width: 10px; border-top: 1px dotted #888; }
.box { position: absolute; top: 6px; left: calc(9px + var(--level) * 21px); width: 9px; height: 9px; border: 1px solid #8c9cb0; background: linear-gradient(#223c80, #223c80) center / 5px 1px no-repeat, #fff; }
.box.plus { background: linear-gradient(#223c80, #223c80) center / 5px 1px no-repeat, linear-gradient(#223c80, #223c80) center / 1px 5px no-repeat, #fff; }
.vbar { display: flex; flex: none; flex-direction: column; align-items: center; width: 16px; background: #f0f0f0; }
.vbar svg, .hbar svg { flex: none; width: 9px; height: 6px; fill: none; stroke: #444; stroke-width: 1.8; }
.thumb { background: #cdcdcd; }
.navigator .thumb { width: 16px; height: 37px; margin-top: 17px; }
.navigator .vbar { width: 17px; }
.navigator .vbar svg { margin: auto 0 6px; }

.chart {
  position: relative;
  flex: 1;
  display: grid;
  grid-template: 507px 1fr / 1fr 45px;
  padding: 3px 0 0 3px;
  background: #000;
  color: #fff;
  font: 9px/12px var(--axis);
}
.plot { width: 100%; height: 507px; }
.grid line { stroke: #7f8c99; stroke-dasharray: 5 3; }
.quote { stroke: #778899; }
.bars { fill: none; stroke: #32d832; }
.frame { fill: none; stroke: #fff; }
.priceaxis { grid-row: 1 / 3; grid-column: 2; display: flex; flex-direction: column; gap: 21px; padding-top: 2px; }
.priceaxis li { display: flex; align-items: center; gap: 2px; flex: none; height: 12px; }
.priceaxis li::before { content: ""; width: 3px; border-top: 1px solid #fff; }
.timeaxis { grid-column: 1; grid-row: 2; display: flex; min-width: 0; }
.timeaxis li { position: relative; flex: none; width: 64px; padding-top: 3px; white-space: nowrap; }
.timeaxis li::before { content: ""; position: absolute; top: 0; left: 0; height: 3px; border-left: 1px solid #fff; }
.last { position: absolute; top: 453px; right: 2px; width: 41px; padding-left: 3px; background: #fff; color: #000; }
.callout {
  position: absolute;
  top: 28px;
  left: 333px;
  width: 348px;
  height: 52px;
  border: 1px solid #2a4a6c;
  background: #fff;
  box-shadow: 2px 3px 8px rgba(100, 120, 140, .3);
  font: 21px/49px "DejaVu Sans", "Noto Sans", sans-serif;
  color: #0000e0;
  text-align: center;
}

.terminal { display: flex; flex: none; height: 85px; padding: 5px 4px 0 0; overflow: hidden; }
.rail { display: flex; flex: none; flex-direction: column; align-items: center; width: 15px; background: linear-gradient(90deg, #dce8f4, #b8cce0) 0 14px no-repeat; }
.rail button { display: flex; align-items: center; flex: none; height: 12px; }
.rail svg { width: 7px; height: 7px; fill: none; stroke: #222; stroke-width: 1.6; }
.rail span { margin-top: 38px; writing-mode: vertical-rl; transform: rotate(180deg); line-height: 14px; }
.trade { flex: 1; height: 120px; border-top: 1px solid #a0a0a0; border-left: 1px solid #a0a0a0; background: #fff; }
table { width: 100%; border-collapse: collapse; table-layout: fixed; }
th, td { padding: 0 4px 0 0; border-right: 1px solid #d0d0d0; font-weight: 400; text-align: right; white-space: nowrap; }
th { height: 24px; padding-right: 5px; border-bottom: 1px solid #c0c0c0; }
td { height: 20px; padding-right: 2px; font-size: 11px; }
th:last-child, td:last-child { border-right: 0; }
.c-order { width: 131px; }
.c-time { width: 184px; }
.c-type { width: 92px; }
.c-size { width: 71px; }
.c-num { width: 102px; }
.h-order { padding-left: 6px; text-align: left; }
.h-order i { margin-left: 12px; font-size: 10px; color: #777; }
.d-order { text-align: left; }
td .ico { width: 14px; height: 15px; margin: 0 5px 0 3px; vertical-align: -3px; }
td.d-profit { padding-right: 6px; }
.d-profit button { margin-left: 10px; }
.d-profit button svg { width: 7px; height: 7px; fill: none; stroke: #888; stroke-width: 1.8; }
.summary { background: #c8c8c8; }
.summary td { height: 20px; border: 0; font: 700 12px/16px var(--compact); text-align: left; }
.summary td.total { padding-right: 24px; text-align: right; }
.bottomtabs { display: flex; align-items: flex-start; height: 24px; margin-top: 8px; border-top: 1px solid #111; background: #f0f0f0; color: #777; }
.bottomtabs button { position: relative; flex: none; padding: 0 0 6px 10px; line-height: 16px; text-align: left; }
.bottomtabs button:not(.current)::after { content: ""; position: absolute; right: 0; top: 4px; height: 12px; border-right: 1px solid #777; }
.bottomtabs .current { width: 52px; margin-top: -1px; padding-top: 1px; border: 2px solid #111; border-top: 0; background: #fff; color: #111; }

.highlight { position: absolute; top: 66px; left: 18px; width: 470px; height: 328px; border: 2px solid #c00808; box-shadow: 1px 3px 6px rgba(0, 0, 0, .3); }
.dialog { position: absolute; top: 72px; left: 23px; width: 447px; background: #f0f0f0; box-shadow: 0 3px 12px rgba(0, 0, 0, .5); font: 11px/16px var(--compact); }
.dialog header { display: flex; align-items: center; height: 30px; padding-left: 5px; background: #fff; color: #999; font: 12px/16px var(--ui); }
.dialog h2 { margin-left: 5px; margin-right: auto; }
.dialog header button { width: 45px; font-size: 14px; }
.dialog header svg:not(.ico) { width: 11px; height: 11px; fill: none; stroke: #999; }
.content { display: flex; gap: 9px; padding: 8px 8px 11px 5px; }
.listbox { display: grid; flex: 1; grid-template: 237px 16px / 1fr 16px; border: 1px solid #828790; background: #fff; padding: 1px 0; }
.tree.symbols { padding-top: 0; }
.tree.symbols li { padding-left: calc(5px + var(--level) * 20px); gap: 5px; }
.symbols .vline { left: calc(-8px + var(--at) * 21px); }
.symbols .hline { left: calc(-7px + var(--level) * 21px); }
.symbols .box { left: calc(-12px + var(--level) * 21px); }
.symbols li.lv2 { padding-left: 46px; }
.symbols .lv1 .vline { top: 9px; }
.listbox .vbar { width: 16px; padding: 5px 0; }
.listbox .vbar .thumb { width: 16px; height: 80px; margin-top: 6px; }
.listbox .vbar .end { margin-top: auto; }
.hbar { grid-column: 1 / 3; display: flex; align-items: center; padding: 0 22px 0 6px; background: #f0f0f0; }
.hbar svg { width: 6px; height: 9px; }
.hbar .thumb { flex: 1; height: 16px; margin: 0 18px 0 6px; }
.actions { display: flex; flex: none; flex-direction: column; gap: 7px; width: 93px; padding-top: 1px; }
.actions button { height: 21px; border: 1px solid #adadad; background: #e1e1e1; }
.actions button:disabled { border-color: #bfbfbf; background: #ccc; color: #8c8c8c; }
.actions .close { margin-top: auto; }
</style>
